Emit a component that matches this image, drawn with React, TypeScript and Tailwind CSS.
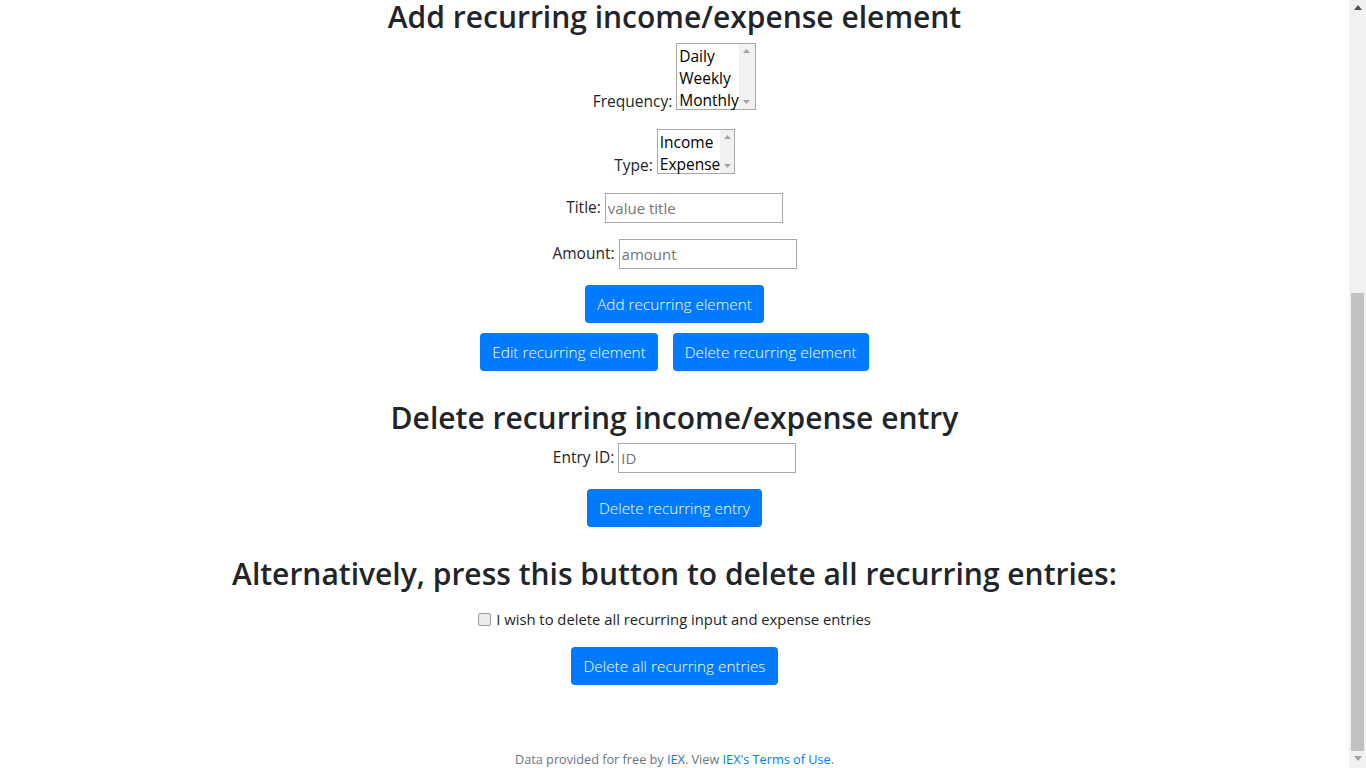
const font = { fontFamily: '"Open Sans", "Noto Sans", sans-serif' };

function ListBox({ options, width, height }: { options: string[]; width: string; height: string }) {
  return (
    <div className={`flex border border-[#a9a9a9] bg-white ${width} ${height}`}>
      <div className="flex flex-1 flex-col pt-px pl-[2px] text-[15.5px] leading-[22px] text-black">
        {options.map((o) => (
          <span key={o}>{o}</span>
        ))}
      </div>
      <div className="flex w-[17px] flex-col items-center justify-between bg-[#f1f1f1] py-[5px]">
        <svg width="7" height="4" viewBox="0 0 7 4">
          <path d="M0 4 L3.5 0 L7 4 Z" fill="#a3a3a3" />
        </svg>
        <svg width="7" height="4" viewBox="0 0 7 4">
          <path d="M0 0 L3.5 4 L7 0 Z" fill="#a3a3a3" />
        </svg>
      </div>
    </div>
  );
}

function TextField({ label, placeholder }: { label: string; placeholder: string }) {
  return (
    <div className="flex items-center justify-center gap-1">
      <span className="text-[15.5px] text-[#212529]">{label}</span>
      <input
        placeholder={placeholder}
        className="h-[30px] w-[178px] border border-[#a9a9a9] px-[2px] text-[15px] placeholder:text-[#757575] outline-none"
        style={font}
      />
    </div>
  );
}

function Btn({ children }: { children: string }) {
  return (
    <button className="h-[38px] rounded-[4px] bg-[#007bff] px-3 text-[15.3px] font-light text-white">
      {children}
    </button>
  );
}

export default function App() {
  return (
    <div className="flex h-screen w-full overflow-hidden bg-white text-[#212529]" style={font}>
      <main className="flex flex-1 flex-col items-center">
        <h2 className="text-[30px] font-semibold leading-[34px]">Add recurring income/expense element</h2>

        <div className="mt-[9px] flex items-end justify-center gap-1">
          <span className="mb-[-3px] text-[15.5px]">Frequency:</span>
          <ListBox options={["Daily", "Weekly", "Monthly"]} width="w-[80px]" height="h-[67px]" />
        </div>

        <div className="mt-[19px] flex items-end justify-center gap-1">
          <span className="mb-[-3px] text-[15.5px]">Type:</span>
          <ListBox options={["Income", "Expense"]} width="w-[78px]" height="h-[45px]" />
        </div>

        <div className="mt-[19px]">
          <TextField label="Title:" placeholder="value title" />
        </div>
        <div className="mt-[16px]">
          <TextField label="Amount:" placeholder="amount" />
        </div>

        <div className="mt-[16px]">
          <Btn>Add recurring element</Btn>
        </div>
        <div className="mt-[10px] flex gap-[15px]">
          <Btn>Edit recurring element</Btn>
          <Btn>Delete recurring element</Btn>
        </div>

        <h2 className="mt-[29px] text-[30px] font-semibold leading-[36px]">Delete recurring income/expense entry</h2>
        <div className="mt-[7px]">
          <TextField label="Entry ID:" placeholder="ID" />
        </div>
        <div className="mt-[16px]">
          <Btn>Delete recurring entry</Btn>
        </div>

        <h2 className="mt-[29px] text-[30px] font-semibold leading-[36px]">
          Alternatively, press this button to delete all recurring entries:
        </h2>
        <div className="mt-[16px] flex items-center gap-[5px] text-[14.8px]">
          <span className="h-[13px] w-[13px] rounded-[2px] border border-[#9a9a9a] bg-[#ececec]" />
          <span>I wish to delete all recurring input and expense entries</span>
        </div>
        <div className="mt-[17px]">
          <Btn>Delete all recurring entries</Btn>
        </div>

        <footer className="mt-auto text-[12.7px] leading-[18px] text-[#6c757d]">
          Data provided for free by <a className="text-[#007bff]">IEX</a>. View{" "}
          <a className="text-[#007bff]">IEX's Terms of Use</a>.
        </footer>
      </main>

      <div className="flex w-[17px] flex-col items-center bg-[#f1f1f1]">
        <svg className="mt-[5px]" width="8" height="5" viewBox="0 0 8 5">
          <path d="M0 5 L4 0 L8 5 Z" fill="#505050" />
        </svg>
        <div className="mt-[283px] h-[458px] w-[13px] bg-[#c1c1c1]" />
        <svg className="mt-[5px]" width="8" height="5" viewBox="0 0 8 5">
          <path d="M0 0 L4 5 L8 0 Z" fill="#a3a3a3" />
        </svg>
      </div>
    </div>
  );
}
